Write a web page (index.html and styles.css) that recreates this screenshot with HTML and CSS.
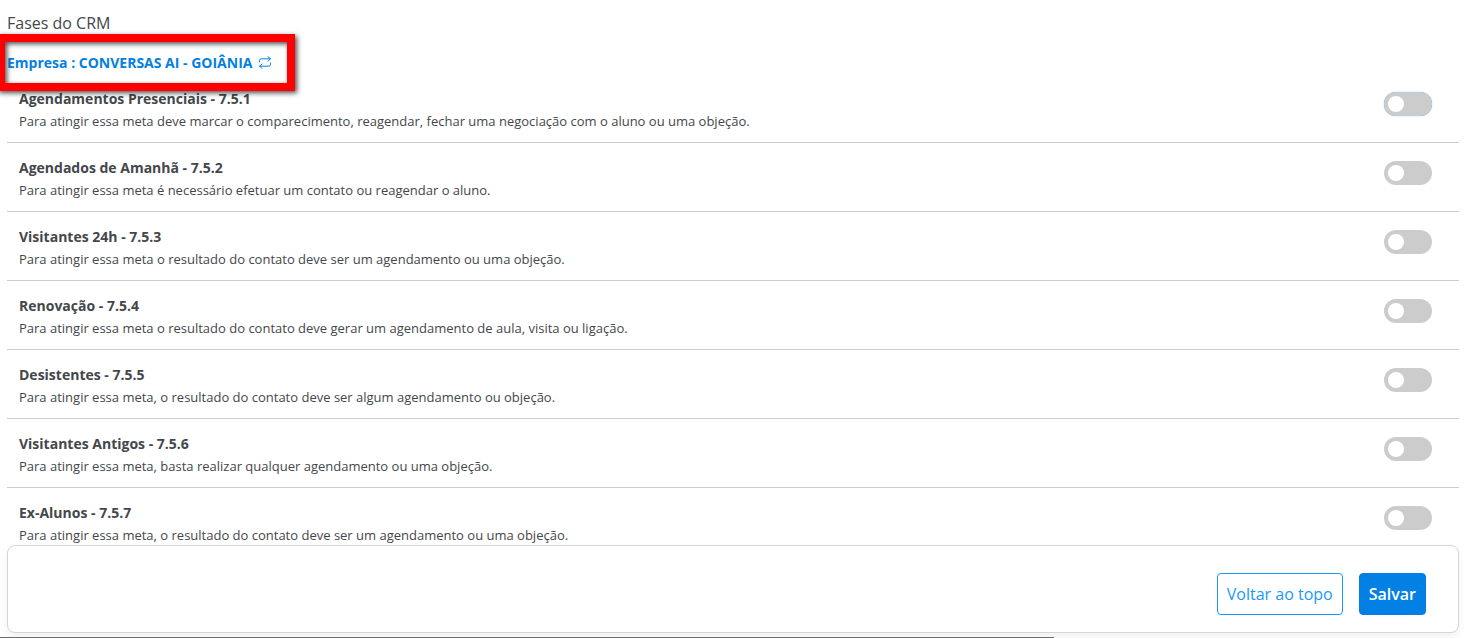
FILE: index.html
```html
<!DOCTYPE html>
<html lang="pt-BR">
  <head>
    <meta charset="UTF-8" />
    <meta name="viewport" content="width=device-width, initial-scale=1.0" />
    <title>Fases do CRM</title>
    <link rel="stylesheet" href="styles.css">
  </head>
  <body>
    <main class="page">
      <h1 class="page-title">Fases do CRM</h1>

      <div class="company">
        <a class="company-link" href="#">
          Empresa : CONVERSAS AI - GOIÂNIA
          <svg class="company-icon" viewBox="0 0 14 14" aria-hidden="true">
            <path d="M1.5 6V4.6a1.8 1.8 0 0 1 1.8-1.8h9M10 .5l2.3 2.3L10 5.1M12.5 7V8.4a1.8 1.8 0 0 1-1.8 1.8h-9M4 7.9l-2.3 2.3L4 12.5" />
          </svg>
        </a>
        <div class="highlight"></div>
      </div>

      <!-- Phase list -->
      <div class="phases">
        <div class="phase">
          <label class="phase-text" for="phase-1">
            <strong>Agendamentos Presenciais - 7.5.1</strong>
            <span class="phase-hint">Para atingir essa meta deve marcar o comparecimento, reagendar, fechar uma negociação com o aluno ou uma objeção.</span>
          </label>
          <input class="switch switch-active" type="checkbox" id="phase-1" />
        </div>
        <div class="phase">
          <label class="phase-text" for="phase-2">
            <strong>Agendados de Amanhã - 7.5.2</strong>
            <span class="phase-hint">Para atingir essa meta é necessário efetuar um contato ou reagendar o aluno.</span>
          </label>
          <input class="switch" type="checkbox" id="phase-2" />
        </div>
        <div class="phase">
          <label class="phase-text" for="phase-3">
            <strong>Visitantes 24h - 7.5.3</strong>
            <span class="phase-hint">Para atingir essa meta o resultado do contato deve ser um agendamento ou uma objeção.</span>
          </label>
          <input class="switch" type="checkbox" id="phase-3" />
        </div>
        <div class="phase">
          <label class="phase-text" for="phase-4">
            <strong>Renovação - 7.5.4</strong>
            <span class="phase-hint">Para atingir essa meta o resultado do contato deve gerar um agendamento de aula, visita ou ligação.</span>
          </label>
          <input class="switch" type="checkbox" id="phase-4" />
        </div>
        <div class="phase">
          <label class="phase-text" for="phase-5">
            <strong>Desistentes - 7.5.5</strong>
            <span class="phase-hint">Para atingir essa meta, o resultado do contato deve ser algum agendamento ou objeção.</span>
          </label>
          <input class="switch" type="checkbox" id="phase-5" />
        </div>
        <div class="phase">
          <label class="phase-text" for="phase-6">
            <strong>Visitantes Antigos - 7.5.6</strong>
            <span class="phase-hint">Para atingir essa meta, basta realizar qualquer agendamento ou uma objeção.</span>
          </label>
          <input class="switch" type="checkbox" id="phase-6" />
        </div>
        <div class="phase">
          <label class="phase-text" for="phase-7">
            <strong>Ex-Alunos - 7.5.7</strong>
            <span class="phase-hint">Para atingir essa meta, o resultado do contato deve ser um agendamento ou uma objeção.</span>
          </label>
          <input class="switch" type="checkbox" id="phase-7" />
        </div>
      </div>

      <div class="actions">
        <button class="btn btn-outline" type="button">Voltar ao topo</button>
        <button class="btn btn-primary" type="button">Salvar</button>
      </div>
    </main>
    <div class="progress"></div>
  </body>
</html>
```
FILE: styles.css
```css
* {
  box-sizing: border-box;
}

body {
  margin: 0;
  height: 100vh;
  display: flex;
  flex-direction: column;
  overflow: hidden;
  background-color: #fff;
  color: #43474b;
  font-family: "Open Sans", "Noto Sans", sans-serif;
  font-size: 14px;
  line-height: 22px;
}

.page {
  flex: 1;
  min-height: 0;
  display: flex;
  flex-direction: column;
  padding: 12px 5px 4px 7px;
}

.page-title {
  margin: 0;
  font-size: 16px;
  font-weight: 400;
}

.company {
  position: relative;
  padding: 18px 0 0;
  height: 40px;
}

.company-link {
  display: inline-flex;
  align-items: center;
  gap: 6px;
  color: #0380e3;
  font-weight: 700;
  text-decoration: none;
}

.company-icon {
  width: 14px;
  height: 14px;
  fill: none;
  stroke: currentColor;
  stroke-width: 1;
  stroke-linecap: round;
  stroke-linejoin: round;
}

/* Red frame around the company link */
.highlight {
  position: absolute;
  top: 0;
  left: -10px;
  width: 298px;
  height: 57px;
  border: 8px solid #f00;
  box-shadow: 2px 2px 5px rgba(0, 0, 0, 0.7), inset 2px 2px 5px rgba(0, 0, 0, 0.7);
  pointer-events: none;
}

.phases {
  flex: 1;
  min-height: 0;
  overflow: hidden;
}

.phase {
  display: flex;
  justify-content: space-between;
  align-items: flex-start;
  padding: 14px 27px 10px 12px;
  border-bottom: 1px solid #ccc;
}

.phase-text {
  display: flex;
  flex-direction: column;
}

.phase-hint {
  font-size: 13px;
}

.switch {
  appearance: none;
  flex: none;
  width: 48px;
  height: 24px;
  margin: 4px 0 0;
  padding: 4px;
  border-radius: 12px;
  background-color: #ccc;
  cursor: pointer;
}

.switch::before {
  content: "";
  display: block;
  width: 16px;
  height: 16px;
  border-radius: 50%;
  background-color: #fff;
}

.switch-active {
  box-shadow: 0 0 1px #2196f3;
}

.switch:checked {
  background-color: #0380e3;
}

.switch:checked::before {
  margin-left: auto;
}

.actions {
  display: flex;
  justify-content: flex-end;
  gap: 16px;
  padding: 27px 32px 17px;
  border: 1px solid #d5d5d5;
  border-radius: 8px;
  background-color: #fff;
  box-shadow: 0 4px 8px rgba(0, 0, 0, 0.06);
}

.btn {
  height: 42px;
  padding: 0 9px;
  border: 1px solid #1998fc;
  border-radius: 4px;
  font-family: inherit;
  font-size: 16px;
  cursor: pointer;
}

.btn-outline {
  background-color: #fff;
  color: #1998fc;
}

.btn-primary {
  background-color: #0380e3;
  border-color: #0380e3;
  color: #fff;
  font-weight: 600;
}

.progress {
  width: 72%;
  height: 1px;
  background-color: #6b6e71;
}
```
